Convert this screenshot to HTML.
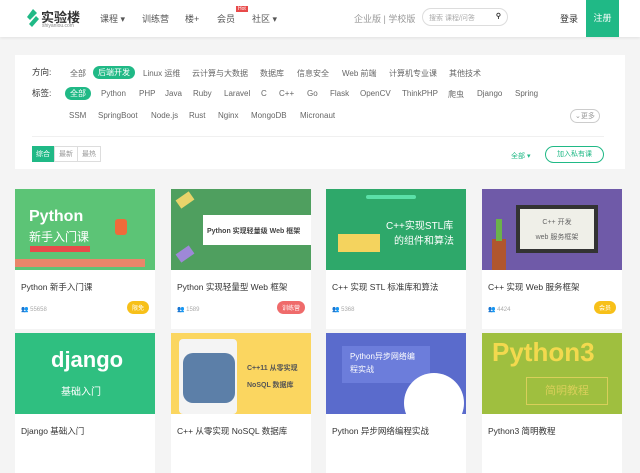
<!DOCTYPE html>
<html><head><meta charset="utf-8"><style>
*{margin:0;padding:0;box-sizing:border-box}
body{width:640px;height:440px;overflow:hidden;background:#f4f4f4;font-family:"Liberation Sans","Noto Sans CJK SC",sans-serif;position:relative;color:#333}
.a{position:absolute;white-space:nowrap}
.hd{position:absolute;left:0;top:0;width:640px;height:37px;background:#fff;box-shadow:0 1px 3px rgba(0,0,0,.08)}
.nav{font-size:9px;color:#555;top:12px}
.panel{position:absolute;left:15px;top:55px;width:610px;height:114px;background:#fff}
.f{font-size:8px;color:#666}
.pill{background:#20b986;color:#fff;border-radius:8px;padding:1px 5px}
.card{position:absolute;width:140px;background:#fff;height:140px}
.img{height:81px;position:relative;overflow:hidden}
.t{position:absolute;left:6px;top:92px;font-size:8.5px;color:#333}
.m{position:absolute;left:6px;top:117px;font-size:6px;color:#aaa}
.b{position:absolute;right:6px;top:112px;height:13px;border-radius:7px;font-size:6px;color:#fff;padding:2px 5px}
</style></head><body>
<div class="hd">
 <svg class="a" style="left:27px;top:9px" width="12" height="19" viewBox="0 0 12 19"><path d="M6 0L10 4L3 11L0 8Z" fill="#20b986"/><path d="M9 7L12 10L5 18L2 15Z" fill="#20b986"/></svg>
 <div class="a" style="left:41px;top:7px;font-size:13px;font-weight:bold;color:#333">实验楼</div>
 <div class="a" style="left:42px;top:23px;font-size:5px;color:#888">shiyanlou.com</div>
 <div class="a nav" style="left:100px">课程 ▾</div>
 <div class="a nav" style="left:142px">训练营</div>
 <div class="a nav" style="left:185px">楼+</div>
 <div class="a nav" style="left:217px">会员</div>
 <div class="a" style="left:236px;top:6px;background:#e84a4a;color:#fff;font-size:5px;padding:0 2px">Hot</div>
 <div class="a nav" style="left:252px">社区 ▾</div>
 <div class="a nav" style="left:354px;color:#999">企业版 | 学校版</div>
 <div class="a" style="left:422px;top:8px;width:86px;height:18px;border:1px solid #ddd;border-radius:9px;font-size:7px;color:#aaa;padding:4px 6px">搜索 课程/问答<span style="position:absolute;right:6px;top:3px;color:#333;font-weight:bold">⚲</span></div>
 <div class="a nav" style="left:560px;color:#333">登录</div>
 <div class="a" style="left:586px;top:0;width:33px;height:37px;background:#20b986;color:#fff;font-size:9px;text-align:center;line-height:37px">注册</div>
</div>
<div class="panel"></div>
<div class="a f" style="left:32px;top:66px;color:#333;font-size:8.5px">方向:</div>
<div class="a f" style="left:70px;top:68px">全部</div>
<div class="a f pill" style="left:93px;top:66px">后端开发</div>
<div class="a f" style="left:143px;top:68px">Linux 运维</div>
<div class="a f" style="left:192px;top:68px">云计算与大数据</div>
<div class="a f" style="left:260px;top:68px">数据库</div>
<div class="a f" style="left:297px;top:68px">信息安全</div>
<div class="a f" style="left:342px;top:68px">Web 前端</div>
<div class="a f" style="left:389px;top:68px">计算机专业课</div>
<div class="a f" style="left:449px;top:68px">其他技术</div>
<div class="a f" style="left:32px;top:87px;color:#333;font-size:8.5px">标签:</div>
<div class="a f pill" style="left:65px;top:87px">全部</div>
<div class="a f" style="left:101px;top:89px">Python</div>
<div class="a f" style="left:139px;top:89px">PHP</div>
<div class="a f" style="left:165px;top:89px">Java</div>
<div class="a f" style="left:193px;top:89px">Ruby</div>
<div class="a f" style="left:224px;top:89px">Laravel</div>
<div class="a f" style="left:261px;top:89px">C</div>
<div class="a f" style="left:279px;top:89px">C++</div>
<div class="a f" style="left:307px;top:89px">Go</div>
<div class="a f" style="left:330px;top:89px">Flask</div>
<div class="a f" style="left:360px;top:89px">OpenCV</div>
<div class="a f" style="left:402px;top:89px">ThinkPHP</div>
<div class="a f" style="left:448px;top:89px">爬虫</div>
<div class="a f" style="left:477px;top:89px">Django</div>
<div class="a f" style="left:515px;top:89px">Spring</div>
<div class="a f" style="left:69px;top:111px">SSM</div>
<div class="a f" style="left:98px;top:111px">SpringBoot</div>
<div class="a f" style="left:151px;top:111px">Node.js</div>
<div class="a f" style="left:189px;top:111px">Rust</div>
<div class="a f" style="left:218px;top:111px">Nginx</div>
<div class="a f" style="left:251px;top:111px">MongoDB</div>
<div class="a f" style="left:300px;top:111px">Micronaut</div>
<div class="a f" style="left:570px;top:109px;border:1px solid #ccc;border-radius:8px;padding:1px 4px;font-size:7px;color:#999">⌄更多</div>
<div class="a" style="left:32px;top:136px;width:572px;height:1px;background:#f0f0f0"></div>
<div class="a" style="left:32px;top:146px;height:16px;display:flex;font-size:7px">
 <div style="background:#20b986;color:#fff;padding:3px 4px">综合</div>
 <div style="border:1px solid #ddd;color:#999;padding:2px 4px">最新</div>
 <div style="border:1px solid #ddd;border-left:0;color:#999;padding:2px 4px">最热</div>
</div>
<div class="a" style="left:511px;top:151px;font-size:7px;color:#20b986">全部 ▾</div>
<div class="a" style="left:545px;top:146px;width:59px;height:17px;border:1px solid #20b986;border-radius:9px;font-size:7px;color:#20b986;text-align:center;line-height:15px">加入私有课</div>

<div class="card" style="left:15px;top:189px"><div class="img" style="background:#5cc476">
 <div class="a" style="left:14px;top:19px;font-size:16px;font-weight:bold;color:#fff">Python</div>
 <div class="a" style="left:14px;top:39px;font-size:12px;color:#fff">新手入门课</div>
 <div class="a" style="left:15px;top:57px;width:60px;height:6px;background:#e84a4a"></div>
 <div class="a" style="left:0;top:70px;width:130px;height:8px;background:#e9866a"></div>
 <div class="a" style="left:100px;top:30px;width:12px;height:16px;background:#f06a3a;border-radius:3px"></div>
</div><div class="t">Python 新手入门课</div><div class="m">👥 55658</div><div class="b" style="background:#f7c019">限免</div></div>

<div class="card" style="left:171px;top:189px"><div class="img" style="background:#4f9f5f">
 <div class="a" style="left:32px;top:26px;width:108px;height:30px;background:#fff;font-size:7px;font-weight:bold;color:#444;padding:11px 4px">Python 实现轻量级 Web 框架</div>
 <div class="a" style="left:6px;top:6px;width:16px;height:10px;background:#e8d36a;transform:rotate(-35deg)"></div>
 <div class="a" style="left:6px;top:60px;width:16px;height:10px;background:#9e88d8;transform:rotate(-35deg)"></div>
</div><div class="t">Python 实现轻量型 Web 框架</div><div class="m">👥 1589</div><div class="b" style="background:#ef6b6b">训练营</div></div>

<div class="card" style="left:326px;top:189px"><div class="img" style="background:#2ea86a">
 <div class="a" style="left:60px;top:28px;font-size:10px;color:#fff">C++实现STL库</div>
 <div class="a" style="left:68px;top:43px;font-size:10px;color:#fff">的组件和算法</div>
 <div class="a" style="left:12px;top:45px;width:42px;height:18px;background:#f4d35e"></div>
 <div class="a" style="left:40px;top:6px;width:50px;height:4px;background:#5be0a8;border-radius:2px"></div>
</div><div class="t">C++ 实现 STL 标准库和算法</div><div class="m">👥 5368</div></div>

<div class="card" style="left:482px;top:189px"><div class="img" style="background:#6f5aa8">
 <div class="a" style="left:34px;top:16px;width:82px;height:48px;background:#efefe8;border:4px solid #333;font-size:7px;color:#666;text-align:center;padding-top:6px;line-height:15px">C++ 开发<br>web 服务框架</div>
 <div class="a" style="left:10px;top:50px;width:14px;height:31px;background:#b0562e"></div>
 <div class="a" style="left:14px;top:30px;width:6px;height:22px;background:#6bb24a"></div>
</div><div class="t">C++ 实现 Web 服务框架</div><div class="m">👥 4424</div><div class="b" style="background:#f7c019">会员</div></div>

<div class="card" style="left:15px;top:333px"><div class="img" style="background:#2fbf80">
 <div class="a" style="left:36px;top:14px;font-size:22px;font-weight:bold;color:#fff">django</div>
 <div class="a" style="left:46px;top:50px;font-size:10px;color:#fff">基础入门</div>
</div><div class="t">Django 基础入门</div></div>

<div class="card" style="left:171px;top:333px"><div class="img" style="background:#fbd660">
 <div class="a" style="left:8px;top:6px;width:58px;height:75px;background:#f4f4f4;border-radius:4px"></div>
 <div class="a" style="left:12px;top:20px;width:52px;height:50px;background:#5c7fa8;border-radius:10px"></div>
 <div class="a" style="left:76px;top:30px;font-size:7px;font-weight:bold;color:#555">C++11 从零实现</div>
 <div class="a" style="left:76px;top:47px;font-size:7px;font-weight:bold;color:#555">NoSQL 数据库</div>
</div><div class="t">C++ 从零实现 NoSQL 数据库</div></div>

<div class="card" style="left:326px;top:333px"><div class="img" style="background:#5a6bcc">
 <div class="a" style="left:16px;top:13px;width:88px;height:37px;background:#6c7ddb;font-size:8px;color:#fff;padding:4px 8px;line-height:13px;white-space:normal">Python异步网络编程实战</div>
 <div class="a" style="left:78px;top:40px;width:60px;height:60px;background:#fff;border-radius:50%"></div>
</div><div class="t">Python 异步网络编程实战</div></div>

<div class="card" style="left:482px;top:333px"><div class="img" style="background:#9fbf3f">
 <div class="a" style="left:10px;top:4px;font-size:26px;font-weight:bold;color:#f3d94e">Python3</div>
 <div class="a" style="left:44px;top:44px;width:82px;height:28px;border:1px solid #d8cf5a;font-size:11px;color:#d8cf5a;text-align:center;line-height:26px">简明教程</div>
</div><div class="t">Python3 简明教程</div></div>
</body></html>
